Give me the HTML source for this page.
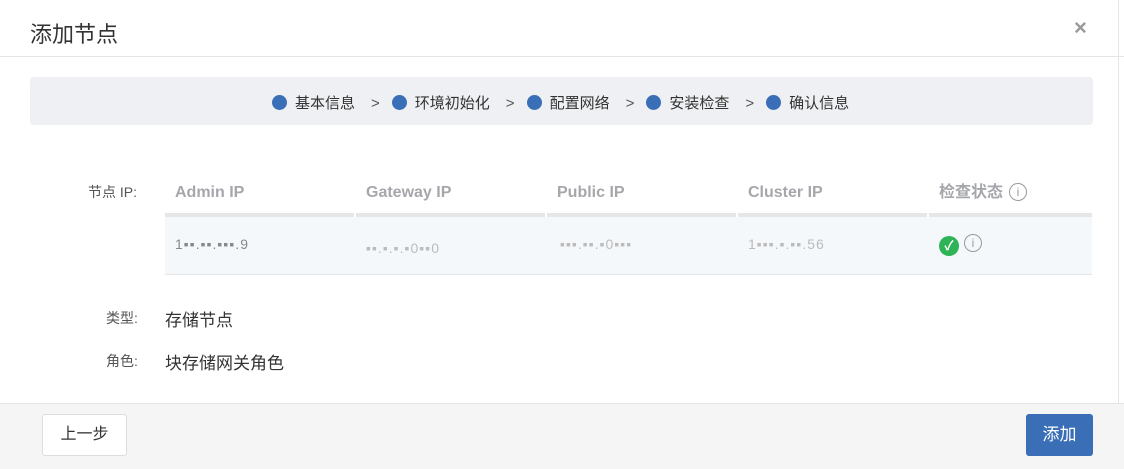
<!DOCTYPE html><html><head><meta charset="utf-8"><style>
body{margin:0;width:1124px;height:468px;background:#fff;font-family:"Liberation Sans","Noto Sans CJK SC",sans-serif;position:relative;overflow:hidden;color:#333}
.a{position:absolute}
.t{white-space:nowrap}
.dot{display:inline-block;width:15px;height:15px;border-radius:50%;background:#3a6fb8;vertical-align:-2px;margin-right:8px}
.arr{display:inline-block;margin:0 12px 0 16px;color:#555}
.th{top:184px;font-size:16px;font-weight:bold;color:#a5a7ab;line-height:18px}
.td{top:236px;font-size:14px;color:#bbb;letter-spacing:1px}
</style></head><body>
<div class="a t" style="left:30px;top:17px;font-size:22px;color:#333">添加节点</div>
<div class="a t" style="left:1074px;top:15px;font-size:22px;color:#999;font-weight:bold">×</div>
<div class="a" style="left:0;top:56px;width:1124px;height:1px;background:#e5e5e5"></div>
<div class="a" style="left:1118px;top:0;width:1px;height:468px;background:#e5e5e5"></div>
<div class="a" style="left:30px;top:77px;width:1063px;height:48px;background:#eff0f3;border-radius:4px"></div>
<div class="a t" style="left:272px;top:92px;font-size:15px;color:#333"><span class="dot"></span>基本信息<span class="arr">&gt;</span><span class="dot"></span>环境初始化<span class="arr">&gt;</span><span class="dot"></span>配置网络<span class="arr">&gt;</span><span class="dot"></span>安装检查<span class="arr">&gt;</span><span class="dot"></span>确认信息</div>
<div class="a t" style="left:88px;top:182px;font-size:14px;color:#555">节点 IP:</div>
<div class="a th t" style="left:175px">Admin IP</div>
<div class="a th t" style="left:366px">Gateway IP</div>
<div class="a th t" style="left:557px">Public IP</div>
<div class="a th t" style="left:748px">Cluster IP</div>
<div class="a th t" style="left:939px">检查状态</div>
<div class="a" style="left:1009px;top:183px;width:16px;height:16px;border:1px solid #999;border-radius:50%;font-size:12px;text-align:center;line-height:16px;color:#999">i</div>
<div class="a" style="left:165px;top:213px;width:927px;height:4px;background:#e6e6e6"></div>
<div class="a" style="left:354px;top:213px;width:2px;height:4px;background:#fff"></div>
<div class="a" style="left:545px;top:213px;width:2px;height:4px;background:#fff"></div>
<div class="a" style="left:736px;top:213px;width:2px;height:4px;background:#fff"></div>
<div class="a" style="left:927px;top:213px;width:2px;height:4px;background:#fff"></div>
<div class="a" style="left:165px;top:217px;width:927px;height:57px;background:#f5f8fb;border-bottom:1px solid #e6e6e6"></div>
<div class="a td t" style="left:175px;color:#888">1▪▪.▪▪.▪▪▪.9</div>
<div class="a td t" style="left:366px;top:240px">▪▪.▪.▪.▪0▪▪0</div>
<div class="a td t" style="left:560px">▪▪▪.▪▪.▪0▪▪▪</div>
<div class="a td t" style="left:748px">1▪▪▪.▪.▪▪.56</div>
<div class="a" style="left:939px;top:236px;width:20px;height:20px;border-radius:50%;background:#2eb356;color:#fff;font-size:13px;text-align:center;line-height:20px;font-weight:bold">✓</div>
<div class="a" style="left:964px;top:234px;width:16px;height:16px;border:1px solid #999;border-radius:50%;font-size:12px;text-align:center;line-height:16px;color:#999">i</div>
<div class="a t" style="left:106px;top:308px;font-size:14px;color:#555">类型:</div>
<div class="a t" style="left:165px;top:306px;font-size:17px">存储节点</div>
<div class="a t" style="left:106px;top:351px;font-size:14px;color:#555">角色:</div>
<div class="a t" style="left:165px;top:349px;font-size:17px">块存储网关角色</div>
<div class="a" style="left:0;top:403px;width:1124px;height:65px;background:#f5f5f5;border-top:1px solid #e5e5e5"></div>
<div class="a" style="left:42px;top:414px;width:83px;height:40px;background:#fff;border:1px solid #ddd;border-radius:3px;text-align:center;line-height:40px;font-size:16px;color:#333">上一步</div>
<div class="a" style="left:1026px;top:414px;width:67px;height:42px;background:#3a6fb8;border-radius:3px;text-align:center;line-height:42px;font-size:17px;color:#fff">添加</div>
</body></html>
